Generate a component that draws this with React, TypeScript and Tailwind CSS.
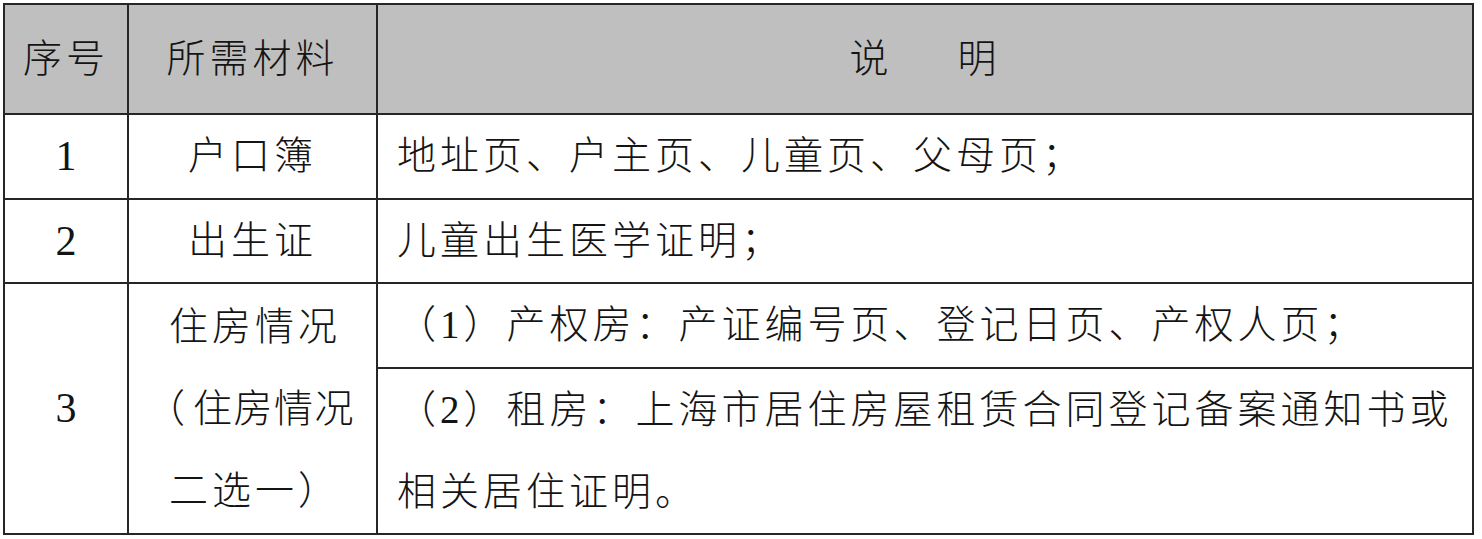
const line = "border-2 border-[#262626]";
const txt = "text-[39px] tracking-[4px] font-light";

export default function App() {
  return (
    <div className="w-[1482px] h-[539px] bg-white pl-[3px] pt-[3px] font-[family-name:'Liberation_Serif','Noto_Sans_CJK_SC',serif] text-[#141414]">
      <table className="w-[1471px] table-fixed border-collapse">
        <colgroup>
          <col className="w-[124px]" />
          <col className="w-[249px]" />
          <col />
        </colgroup>
        <thead>
          <tr className="bg-[#bfbfbf]">
            <th className={`${line} ${txt} h-[110px] text-center`}>序号</th>
            <th className={`${line} ${txt} text-center`}>所需材料</th>
            <th className={`${line} ${txt} text-center`}>
              <span>说</span>
              <span className="ml-[65px]">明</span>
            </th>
          </tr>
        </thead>
        <tbody>
          <tr>
            <td className={`${line} h-[85px] text-center text-[42px]`}>1</td>
            <td className={`${line} ${txt} text-center`}>户口簿</td>
            <td className={`${line} ${txt} pl-[19px] whitespace-nowrap`}>地址页、户主页、儿童页、父母页；</td>
          </tr>
          <tr>
            <td className={`${line} h-[84px] text-center text-[42px]`}>2</td>
            <td className={`${line} ${txt} text-center`}>出生证</td>
            <td className={`${line} ${txt} pl-[19px] whitespace-nowrap`}>儿童出生医学证明；</td>
          </tr>
          <tr>
            <td rowSpan={2} className={`${line} text-center text-[42px]`}>3</td>
            <td rowSpan={2} className={`${line} ${txt} pl-[40px] leading-[82px] whitespace-nowrap`}>
              <div>住房情况</div>
              <div className="tracking-[1.5px]">
                <span className="inline-block w-[24px]">
                  <span className="-ml-[23px]">（</span>
                </span>
                住房情况
              </div>
              <div>二选一）</div>
            </td>
            <td className={`${line} ${txt} h-[85px] pl-[19px] whitespace-nowrap`}>（1）产权房：产证编号页、登记日页、产权人页；</td>
          </tr>
          <tr>
            <td className={`${line} ${txt} h-[164px] pl-[19px] leading-[82px] whitespace-nowrap`}>
              （2）租房：上海市居住房屋租赁合同登记备案通知书或
              <br />
              相关居住证明。
            </td>
          </tr>
        </tbody>
      </table>
    </div>
  );
}
